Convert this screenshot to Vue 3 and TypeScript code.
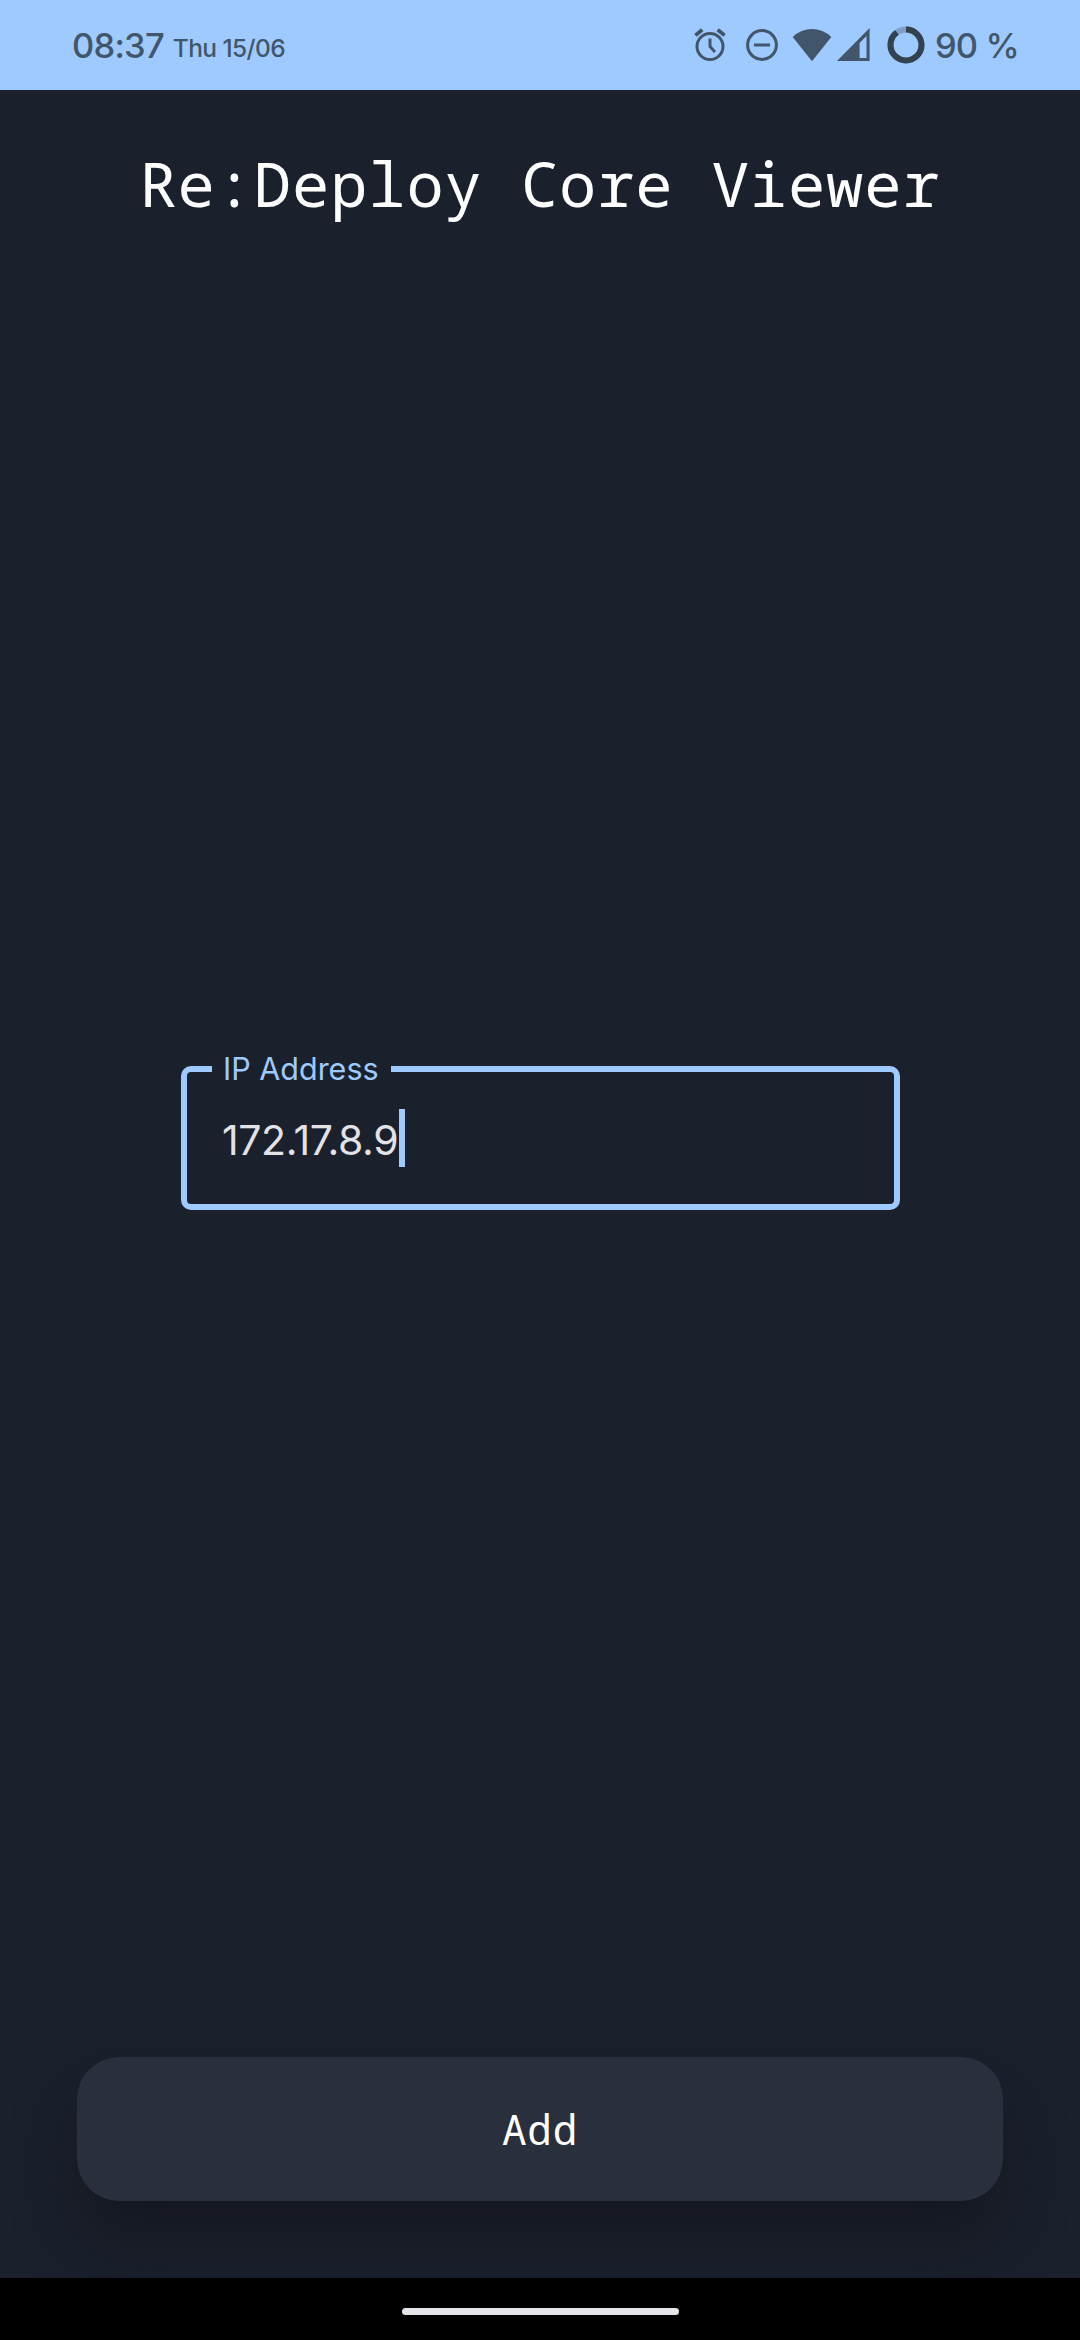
<script setup lang="ts">
import { ref } from 'vue'

const time = ref('08:37')
const date = ref('Thu 15/06')
const battery = ref(90)
const address = ref('172.17.8.9')
</script>

<template>
  <div class="screen">
    <header class="status">
      <span class="time">{{ time }}</span>
      <span class="date">{{ date }}</span>
      <svg class="alarm" width="32" height="34" viewBox="0 0 32 34" fill="none" stroke="currentColor">
        <circle cx="16" cy="18.5" r="13" stroke-width="3" />
        <path d="M16 10.5V18.5L21 24" stroke-width="3" />
        <path d="M1.4 7.4L8.3 1.7M30.6 7.4L23.7 1.7" stroke-width="3.8" />
      </svg>
      <svg class="dnd" width="34" height="34" viewBox="0 0 34 34" fill="none" stroke="currentColor" stroke-width="3">
        <circle cx="17" cy="17" r="14.4" />
        <path d="M9 17H25" />
      </svg>
      <svg class="wifi" width="40" height="34" viewBox="0 0 40 34" fill="currentColor">
        <path d="M.7 9Q9 1 20 1T39.3 9L20 33.3Z" />
      </svg>
      <svg class="signal" width="33" height="34" viewBox="0 0 33 34" fill="currentColor">
        <path fill-rule="evenodd" d="M0 33L32.6 0V33ZM22.6 15V30H29.5V8Z" />
      </svg>
      <svg class="ring" width="38" height="38" viewBox="0 0 38 38" fill="none" stroke-width="6">
        <circle cx="19" cy="19" r="15.5" stroke="#7d9fc8" />
        <circle
          cx="19" cy="19" r="15.5" stroke="#33424f" pathLength="100"
          :stroke-dasharray="`${battery} 100`" transform="rotate(-90 19 19)"
        />
      </svg>
      <span class="percent">{{ battery }} %</span>
    </header>

    <main>
      <h1>Re:Deploy Core Viewer</h1>
      <fieldset>
        <legend>IP Address</legend>
        <div class="entry"><span>{{ address }}</span><i class="caret"></i></div>
      </fieldset>
      <button type="button">Add</button>
    </main>

    <footer><div class="handle"></div></footer>
  </div>
</template>

<style>
body {
  background: #1a202c;
}
</style>

<style scoped>
.screen {
  width: 1080px;
  height: 2340px;
  display: flex;
  flex-direction: column;
  overflow: hidden;
  background: #1a202c;
  font-family: Inter, sans-serif;
}
.status {
  height: 90px;
  flex: none;
  display: flex;
  align-items: center;
  box-sizing: border-box;
  padding-left: 72px;
  background: #9fcaff;
  color: #42566b;
  white-space: nowrap;
}
.status svg {
  flex: none;
}
.time {
  font-size: 34.5px;
  font-weight: 500;
  letter-spacing: -0.8px;
}
.date {
  margin: 6px auto 0 9px;
  font-size: 24.5px;
  font-weight: 500;
  letter-spacing: -0.6px;
}
.dnd { margin-left: 19px; }
.wifi { margin-left: 13px; }
.signal { margin-left: 5px; }
.ring { margin-left: 17px; }
.percent {
  width: 155px;
  padding-left: 10px;
  box-sizing: border-box;
  font-size: 34.5px;
  font-weight: 450;
  letter-spacing: -0.9px;
}
main {
  flex: 1;
  display: flex;
  flex-direction: column;
  align-items: center;
  overflow: hidden;
}
h1 {
  margin: 51px 0 0;
  height: 85px;
  white-space: pre;
  color: #fff;
  font: 400 62px/84px "Noto Sans Mono", "DejaVu Sans Mono", monospace;
  letter-spacing: 0.95px;
}
fieldset {
  width: 719px;
  height: 163px;
  margin: 821px 0 0 1px;
  padding: 0 0 0 31px;
  box-sizing: border-box;
  border: 6px solid #9fcaff;
  border-radius: 10px;
}
legend {
  margin-left: -6px;
  padding: 0 12px 0 11px;
  color: #9fcaff;
  font-size: 30.5px;
  line-height: 44px;
}
.entry {
  margin-top: 18px;
  padding-left: 4px;
  height: 58px;
  display: flex;
  align-items: center;
  color: #e3e2e6;
  font-size: 41px;
  letter-spacing: -0.4px;
}
.entry span {
  padding-top: 3px;
}
.caret {
  width: 5.5px;
  height: 58px;
  margin-left: 1px;
  background: #9fcaff;
}
button {
  width: 926px;
  height: 144px;
  margin-top: 847px;
  flex: none;
  padding: 0;
  border: 0;
  border-radius: 42px;
  background: #292f3c;
  color: #fff;
  font: 400 41px/144px "Noto Sans Mono", "DejaVu Sans Mono", monospace;
  letter-spacing: 0.8px;
  box-shadow: 0 40px 64px -6px rgba(18, 18, 24, 0.65);
}
footer {
  height: 62px;
  flex: none;
  display: flex;
  justify-content: center;
  padding-top: 30px;
  box-sizing: border-box;
  background: #000;
}
.handle {
  width: 277px;
  height: 7px;
  border-radius: 4px;
  background: #e6e4e8;
}
</style>
